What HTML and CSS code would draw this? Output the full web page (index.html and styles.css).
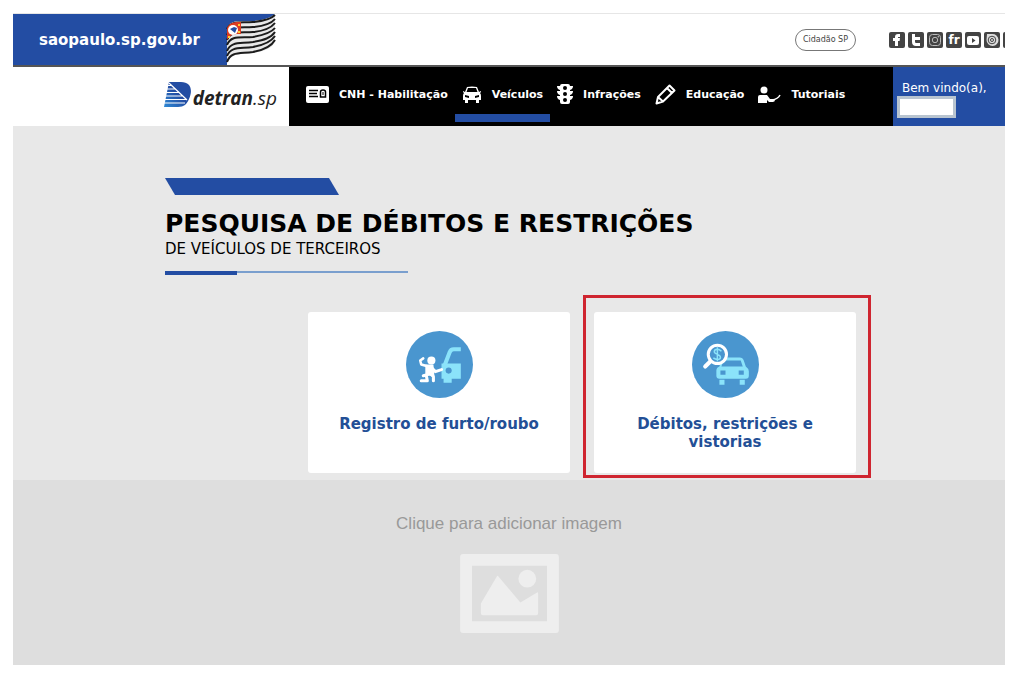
FILE: index.html
```html
<!DOCTYPE html>
<html lang="pt-br">
<head>
<meta charset="utf-8">
<title>Detran.SP - Pesquisa de débitos e restrições</title>
<link rel="stylesheet" href="styles.css">
</head>
<body>

<header class="gov">
	<a class="gov-brand" href="#">saopaulo.sp.gov.br</a>
	<svg class="flag" viewBox="0 0 50 51" aria-hidden="true">
		<path d="M0 0H49C45 4 38 6 27 7C14 8 5 5 1 14V51H0z" fill="#234da3"/>
		<path d="M1 14C5 5 14 8 27 7C38 6 45 4 49 0V27C47 34 40 37 27 39C14 41 5 38 1 49z" fill="#e8e8e8"/>
		<g fill="none" stroke="#1c1c1c" stroke-width="2">
			<path d="M1 15C5 6 14 9 27 8C38 7 45 5 49 1"/>
			<path d="M1 21C5 11 14 14 27 13C38 12 45 10 49 5"/>
			<path d="M1 26C5 16 14 19 27 18C38 17 45 14 49 9"/>
			<path d="M1 31C5 21 14 24 27 23C38 21 45 19 49 14"/>
			<path d="M1 37C5 27 14 30 27 28C38 26 45 24 49 18"/>
			<path d="M1 42C5 32 14 35 27 33C38 31 45 28 49 22"/>
			<path d="M1 48C5 37 14 40 27 38C38 36 45 33 49 26"/>
		</g>
		<path d="M1 14C4 8 9 8 15 8V20C9 20 4 20 1 26z" fill="#dd3c22"/>
		<circle cx="7" cy="16" r="5" fill="#fff"/>
		<path d="M4 15l4-2 3 1-2 5z" fill="#234da3"/>
		<path d="M12 10h2v2h-2zM12 17h2v2h-2zM2 22h2v2H2z" fill="#fc3"/>
	</svg>
	<a class="pill" href="#">Cidadão SP</a>
	<div class="social">
		<a href="#" aria-label="Facebook"><svg viewBox="0 0 16 16"><path d="M6 14V9H4V6h2V5c0-2 1-3 3-3h2v3H9.500c-.5 0-.5.3-.5 1h2l-.4 3H9v5z"/></svg></a>
		<a href="#" aria-label="Twitter"><svg viewBox="0 0 16 16"><path d="M4 2h3v3h5v3H7v1.500c0 1 .5 1.500 1.500 1.500H12v3H8c-2.500 0-4-1.500-4-4z"/></svg></a>
		<a href="#" aria-label="Instagram"><svg viewBox="0 0 16 16"><g fill="none" stroke="#bbb"><rect x="2.500" y="2.500" width="11" height="11" rx="3"/><circle cx="8" cy="8" r="2.700"/></g><circle cx="11.300" cy="4.800" r=".8" fill="#bbb"/></svg></a>
		<a href="#" aria-label="Flickr"><b>fr</b></a>
		<a href="#" aria-label="YouTube"><svg viewBox="0 0 16 16"><rect x="2" y="4" width="12" height="9" rx="2"/><path d="M7 6l3.500 2.500L7 11z" fill="#444"/></svg></a>
		<a href="#" aria-label="Issuu"><svg viewBox="0 0 16 16"><path d="M3 2h5a6 6 0 1 1-5.500 6z" fill="#ddd"/><g fill="none" stroke="#444"><circle cx="8" cy="8" r="3.800"/><circle cx="8" cy="8" r="1.500"/></g></svg></a>
		<a href="#" aria-label="Mais"></a>
	</div>
</header>

<nav class="bar">
	<a class="logo" href="#" aria-label="detran.sp">
		<svg viewBox="0 0 27 25" aria-hidden="true">
			<defs><linearGradient id="blue" x1="1" y1="0" x2="0" y2="1"><stop offset=".5" stop-color="#234da3"/><stop offset="1" stop-color="#2e8ad6"/></linearGradient></defs>
			<path d="M5 0H17C27 0 29 8 25 17C23 22 20 25 14 25H0z" fill="url(#blue)"/>
			<path d="M2 3.500H8M2 7H12M2 10.500H15M2 14H19M0 17.500H22M0 21H21M5 1L23 18" fill="none" stroke="#fff" stroke-width="1.200"/>
		</svg>
		<span><b>detran</b>.sp</span>
	</a>
	<div class="menu">
		<a href="#">
			<svg width="23" height="17" viewBox="0 0 23 17"><rect width="23" height="17" rx="2" fill="#fff"/><path d="M3 4.500h9M3 7.500h8M3 10.500h9" stroke="#000" stroke-width="1.500"/><path d="M14.500 11V6q0-2 2.500-2t2.500 2v5z" fill="#fff" stroke="#000" stroke-width="1.500"/><path d="M17 6v3" stroke="#000"/></svg>
			CNH - Habilitação
		</a>
		<a class="active" href="#">
			<svg width="20" height="17" viewBox="0 0 20 17"><path fill="#fff" fill-rule="evenodd" d="M5 1Q10 0 15 1L17 6l2-1v1l-1 1q1 1 1 3v4h-2v3h-3v-3H6v3H3v-3H1v-4q0-2 1-3L1 6V5l2 1zM6 2L4.500 6h11L14 2zM3 9v2l4 1v-2zM17 9v2l-4 1v-2z"/></svg>
			Veículos
		</a>
		<a href="#">
			<svg width="16" height="20" viewBox="0 0 16 20"><path fill="#fff" d="M3 2Q3 0 5 0h6q2 0 2 2h3q0 3-3 4v1h3q0 3-3 4v1h3q0 3-3 4v2q0 2-2 2H5q-2 0-2-2v-2q-3-1-3-4h3v-1Q0 10 0 7h3V6Q0 5 0 2z"/><circle cx="8" cy="4" r="2"/><circle cx="8" cy="10" r="2"/><circle cx="8" cy="16" r="2"/></svg>
			Infrações
		</a>
		<a href="#">
			<svg width="21" height="21" viewBox="0 0 21 21"><path d="M1.500 19.500L3 13 14.500 1.500 19.500 6.500 8 17.500zM12 4l5 5M3 13l5 4.500" fill="none" stroke="#fff" stroke-width="2" stroke-linejoin="round"/></svg>
			Educação
		</a>
		<a href="#">
			<svg width="23" height="17" viewBox="0 0 23 17"><circle cx="6" cy="4" r="3.500" fill="#fff"/><path fill="#fff" d="M0 17v-6q0-2 2-2h7l3 4h4l1 2-2 1h-4l-2-2v3z"/><path d="M14 14Q20 13 22 9" fill="none" stroke="#fff" stroke-width="1.500"/></svg>
			Tutoriais
		</a>
	</div>
	<div class="user">
		<label for="username">Bem vindo(a),</label>
		<input type="text" id="username">
	</div>
</nav>

<main>
	<div class="stripe"></div>
	<h1>PESQUISA DE DÉBITOS E RESTRIÇÕES</h1>
	<p class="subtitle">DE VEÍCULOS DE TERCEIROS</p>
	<div class="rule"></div>

	<div class="cards">
		<a class="card" href="#">
			<svg viewBox="0 0 66 66" aria-hidden="true">
				<circle cx="33" cy="33" r="33" fill="#4a96cf"/>
				<path d="M38 34L43 21Q44 18 47 18H54" fill="none" stroke="#8be3fa" stroke-width="4"/>
				<path d="M35 32H54V47H45V51H37V47H35z" fill="#8be3fa"/>
				<circle cx="42" cy="39" r="3" fill="#4a96cf"/>
				<g fill="none" stroke="#fff" stroke-linecap="round" stroke-linejoin="round">
					<path d="M22 35L15 33L14 29L17 27" stroke-width="2.500"/>
					<path d="M25 36L29 40L35 38" stroke-width="3"/>
					<path d="M21 43L17 44M15 49H21L20 44M24 42L27 45V49" stroke-width="3"/>
				</g>
				<path d="M19 33h8l1 11h-9z" fill="#fff"/>
				<circle cx="25" cy="29" r="4" fill="#fff"/>
			</svg>
			<span>Registro de furto/roubo</span>
		</a>
		<a class="card marked" href="#">
			<svg viewBox="0 0 66 66" aria-hidden="true">
				<circle cx="33" cy="33" r="33" fill="#4a96cf"/>
				<path fill="#8be3fa" fill-rule="evenodd" d="M30 26H47Q50 26 51 29L53 35Q56 37 56 40V44Q56 47 53 47H27Q24 47 24 44V39Q24 36 27 35zM31 29L29 35H50L48 29zM28 39h5v4h-5zM46 39h5v4h-5zM27 48h5v5h-5zM47 48h5v5h-5z"/>
				<circle cx="25" cy="23" r="9" fill="#4a96cf" stroke="#fff" stroke-width="3"/>
				<path d="M18 30L13 35" stroke="#fff" stroke-width="4" stroke-linecap="round"/>
				<path d="M29 20Q27 18 25 18Q22 18 22 20.500Q22 22 25 23Q28 24 28 26Q28 28 25 28Q23 28 21 26.500M25 16v14" fill="none" stroke="#8be3fa" stroke-width="1.500"/>
			</svg>
			<span>Débitos, restrições e vistorias</span>
		</a>
	</div>
</main>

<button class="add-image" type="button">
	<span>Clique para adicionar imagem</span>
	<svg viewBox="0 0 100 80" aria-hidden="true">
		<path fill="#eee" fill-rule="evenodd" d="M3 0H97Q100 0 100 3V77Q100 80 97 80H3Q0 80 0 77V3Q0 0 3 0zM12 12V68H88V12z"/>
		<path fill="#eee" d="M21 50L37 23Q38 21 39 23L61 49L78 39Q79 38 79 40V60Q79 62 77 62H23Q21 62 21 60z"/>
		<circle cx="68" cy="25" r="9" fill="#eee"/>
	</svg>
</button>

</body>
</html>
```

FILE: styles.css
```css
* {
	box-sizing: border-box;
}
body {
	margin: 13px 19px 20px 13px;
	font-family: "DejaVu Sans", Verdana, sans-serif;
	background-color: #fff;
	color: #000;
}
a {
	color: inherit;
	text-decoration: none;
}
.gov {
	display: flex;
	align-items: center;
	height: 54px;
	border-top: 1px solid #e6e6e6;
	border-bottom: 2px solid #555;
}
.gov-brand {
	display: flex;
	align-items: center;
	align-self: stretch;
	width: 213px;
	padding: 0 0 0 26px;
	background-color: #234da3;
	color: #fff;
	font-size: 15px;
	font-weight: bold;
}
.flag {
	width: 50px;
	height: 51px;
}
.pill {
	margin-left: auto;
	padding: 0 7px;
	border: 1px solid #777;
	border-radius: 11px;
	color: #444;
	font-size: 8px;
	line-height: 20px;
}
.social {
	display: flex;
	gap: 3px;
	width: 116px;
	margin-left: 33px;
	overflow: hidden;
}
.social a {
	flex: 0 0 16px;
	height: 16px;
	border-radius: 2px;
	background-color: #444;
	color: #fff;
	font-size: 12px;
	line-height: 16px;
	text-align: center;
}
.social svg {
	display: block;
	fill: #fff;
}
.bar {
	display: flex;
	height: 59px;
	background-color: #000;
}
.logo {
	display: flex;
	align-items: center;
	justify-content: flex-end;
	gap: 2px;
	width: 276px;
	padding: 0 12px 4px 0;
	background-color: #fff;
	color: #222;
	font-family: "Open Sans", sans-serif;
	font-size: 19px;
	font-style: italic;
}
.logo svg {
	width: 27px;
	height: 25px;
}
.logo span {
	padding-top: 6px;
}
.menu {
	display: flex;
	flex: 1;
	padding-left: 10px;
	color: #fff;
	font-size: 11px;
	font-weight: bold;
}
.menu a {
	display: flex;
	align-items: center;
	gap: 10px;
	padding: 7px 7px 0;
	border-bottom: 8px solid transparent;
	margin-bottom: 4px;
	white-space: nowrap;
}
.menu .active {
	border-color: #234da3;
}
.user {
	display: flex;
	flex-direction: column;
	align-items: flex-start;
	width: 112px;
	padding: 13px 4px 0;
	background-color: #234da3;
	color: #fff;
	font-size: 12px;
	line-height: 16px;
}
.user label {
	padding-left: 5px;
}
.user input {
	width: 59px;
	height: 22px;
	border: 3px solid #b8c4d0;
	background-color: #fff;
}
main {
	padding: 52px 149px 7px 152px;
	background-color: #e8e8e8;
}
.stripe {
	width: 174px;
	height: 17px;
	background-color: #234da3;
	clip-path: polygon(0 0, 164px 0, 100% 100%, 10px 100%);
}
h1 {
	margin: 14px 0 0;
	font-size: 25px;
	line-height: 30px;
}
.subtitle {
	margin: 0;
	font-size: 15px;
	line-height: 20px;
}
.rule {
	width: 243px;
	height: 4px;
	margin-top: 12px;
	background-image: linear-gradient(#234da3, #234da3), linear-gradient(#7a9fce, #7a9fce);
	background-size: 72px 4px, 100% 2px;
	background-repeat: no-repeat;
}
.cards {
	display: grid;
	grid-template-columns: 1fr 1fr;
	gap: 24px;
	margin: 37px 0 0 143px;
}
.card {
	position: relative;
	display: flex;
	flex-direction: column;
	align-items: center;
	gap: 17px;
	min-height: 161px;
	padding: 19px 28px;
	border-radius: 3px;
	background-color: #fff;
	color: #234f96;
	font-size: 15px;
	font-weight: bold;
	line-height: 18px;
	text-align: center;
}
.card svg {
	width: 67px;
	height: 67px;
}
/* red frame around the card to pick */
.marked::after {
	content: "";
	position: absolute;
	inset: -17px -15px -5px -11px;
	border: 3px solid #cf2530;
}
.add-image {
	display: flex;
	flex-direction: column;
	align-items: center;
	gap: 20px;
	width: 100%;
	padding: 34px 0 32px;
	border: 0;
	background-color: #dedede;
	color: #999;
	font-family: "Liberation Sans", Arial, sans-serif;
	font-size: 17px;
	line-height: 20px;
}
.add-image svg {
	width: 99px;
	height: 79px;
}
```
